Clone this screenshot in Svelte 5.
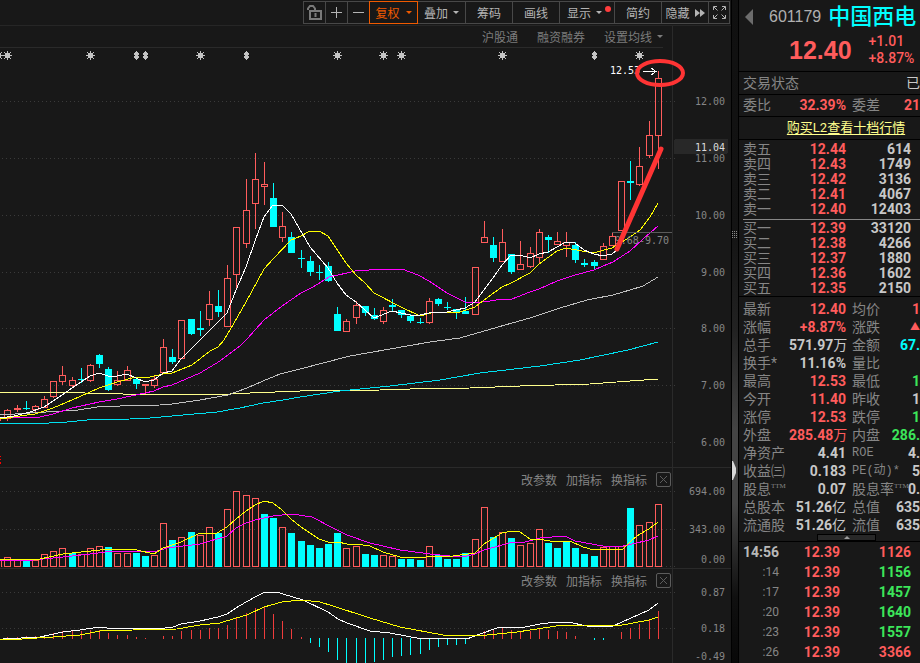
<script lang="ts">
  type Candle = [string, number, number, number, number];

  // colour, body top, body bottom, high, low
  const candles: Candle[] = [
    ['r', 410, 419, 409, 421], ['r', 408, 410, 405, 412], ['c', 408, 409, 401, 410], ['r', 406, 410, 405, 413],
    ['r', 399, 408, 396, 408], ['r', 381, 397, 381, 398], ['r', 375, 382, 366, 385], ['r', 380, 386, 377, 388],
    ['c', 379, 380, 368, 383], ['r', 365, 381, 364, 382], ['c', 355, 364, 354, 368], ['c', 369, 390, 367, 391],
    ['r', 380, 385, 371, 386], ['r', 370, 381, 366, 381], ['c', 379, 384, 377, 389], ['r', 384, 386, 384, 395],
    ['r', 379, 386, 375, 388], ['r', 347, 373, 339, 374], ['c', 357, 362, 349, 364], ['r', 320, 359, 320, 359],
    ['c', 319, 334, 319, 335], ['c', 328, 330, 311, 336], ['r', 304, 320, 291, 326], ['c', 306, 312, 290, 317],
    ['r', 278, 327, 265, 327], ['r', 227, 275, 227, 289], ['r', 210, 244, 179, 248], ['r', 179, 204, 153, 229],
    ['r', 184, 187, 162, 205], ['c', 198, 227, 183, 227], ['r', 226, 238, 212, 242], ['c', 237, 253, 232, 253],
    ['c', 258, 259, 250, 268], ['c', 261, 272, 256, 276], ['c', 272, 273, 265, 280], ['c', 266, 281, 262, 282],
    ['c', 314, 331, 307, 331], ['r', 321, 332, 319, 332], ['r', 305, 318, 301, 324], ['c', 306, 313, 306, 316],
    ['c', 315, 319, 308, 320], ['r', 310, 322, 307, 324], ['c', 305, 307, 299, 312], ['c', 310, 315, 310, 318],
    ['c', 316, 321, 314, 323], ['c', 322, 323, 318, 324], ['r', 301, 323, 298, 324], ['c', 299, 304, 298, 306],
    ['c', 307, 308, 302, 310], ['c', 309, 312, 309, 319], ['c', 311, 314, 297, 314], ['r', 267, 315, 267, 315],
    ['r', 237, 243, 221, 243], ['c', 245, 258, 237, 262], ['r', 242, 262, 229, 262], ['c', 254, 272, 254, 274],
    ['r', 264, 270, 241, 270], ['r', 253, 267, 247, 268], ['r', 232, 258, 229, 264], ['c', 237, 240, 235, 253],
    ['r', 241, 245, 232, 245], ['r', 242, 246, 232, 257], ['c', 245, 260, 242, 263], ['c', 263, 265, 259, 267],
    ['c', 262, 266, 260, 270], ['r', 246, 260, 243, 260], ['r', 236, 246, 233, 246], ['r', 181, 231, 181, 231],
    ['c', 181, 183, 161, 200], ['r', 166, 185, 147, 186], ['r', 135, 156, 121, 158], ['r', 78, 136, 71, 169]
  ];

  const volumes =
    'r557 r560 c561 r560 r554 r551 r548 c553 r554 r548 r546 c547 r553 r553 c553 c556 r555 r523 c540 r537 c532 r535 r527 c533 ' +
    'r509 r491 r495 r498 c514 c518 r527 c533 c541 c545 c548 c544 c533 r548 r546 c554 c555 r555 r556 c559 c559 c560 r546 c555 ' +
    'c559 c559 c553 r539 r507 c537 r532 c538 r545 r543 r529 c543 c548 c541 c548 c554 c556 r547 r546 r546 c508 r525 r522 r504';

  const volumeBars = volumes.split(' ').map((v, i) => ({ x: cx(i), kind: v[0], y: Number(v.slice(1)) }));

  // bar ends, 0 = no bar; values under the base line are negative momentum
  const macd = [
    637, 637, 636, 636, 635, 633, 631, 630, 631, 630, 630, 633, 635, 635, 637, 638, 0, 636, 636, 631, 630, 630, 628, 628,
    625, 618, 613, 608, 607, 614, 621, 629, 637, 643, 647, 652, 660, 663, 663, 663, 662, 660, 657, 656, 655, 654, 650, 647,
    645, 645, 644, 0, 631, 629, 627, 630, 631, 631, 628, 630, 631, 632, 636, 0, 640, 640, 0, 632, 628, 624, 619, 611
  ];

  const priceLines = [
    { cls: 'ma250', pts: '0,392 85,393 123,394 230,394 250,393 300,391 380,390 410,389 470,388 520,386 590,384 630,381 658,379' },
    { cls: 'ma120', pts: '0,423 49,423 67,422 87,420 130,419 150,418 183,415 217,412 240,408 263,403 283,400 300,397 340,391 390,386 440,380 480,373 540,366 580,360 628,350 658,342' },
    { cls: 'ma60', pts: '0,415 30,413 62,411 78,410 97,407 120,406 160,405 172,404 200,400 228,395 247,388 263,381 280,374 300,369 350,356 390,349 430,342 460,338 512,323 530,318 560,308 587,300 613,295 630,290 643,286 658,277' },
    { cls: 'ma20', pts: '0,417 40,417 53,414 72,408 99,402 117,399 145,393 154,391 163,387 172,385 200,373 220,361 240,346 247,339 264,320 282,306 301,293 313,287 329,277 347,273 355,271 383,269 402,269 418,275 429,281 447,293 465,302 475,303 490,301 502,299 512,299 530,292 539,289 557,281 575,275 594,270 603,266 613,262 630,251 643,239 658,226' },
    { cls: 'ma10', pts: '0,419 20,416 35,414 53,408 72,400 90,392 99,388 117,382 136,377 150,377 163,374 172,373 192,365 210,351 218,347 224,340 230,330 246,302 264,269 273,259 291,240 301,236 310,231 319,231 328,236 346,263 356,275 365,283 374,293 401,307 420,316 434,312 460,312 475,307 484,300 502,287 511,283 530,273 539,264 557,251 566,248 593,253 612,248 630,237 640,230 650,217 658,203' },
    { cls: 'ma5', pts: '0,418 14,416 30,412 44,407 62,395 72,388 81,382 90,376 99,373 108,376 117,376 127,374 136,378 145,382 154,380 163,373 172,371 181,359 200,340 227,313 236,290 246,267 255,241 264,217 273,205 282,205 291,214 310,247 328,268 337,283 346,295 356,302 374,318 392,311 410,315 420,315 429,313 447,312 465,308 475,302 493,278 502,265 511,255 520,255 530,258 539,254 548,252 566,242 575,243 584,250 594,254 603,256 612,254 618,249 639,201 650,177 658,152' }
  ];

  const volumeLines = [
    { cls: 'ma20', pts: '0,561 33,560 63,557 90,554 113,551 147,551 154,552 167,548 200,544 217,539 227,536 236,528 246,523 255,520 273,516 292,514 312,517 333,528 347,535 370,543 400,550 430,554 450,556 467,556 475,554 484,550 513,542 525,542 540,538 565,536 575,541 603,546 623,546 632,544 649,540 658,536' },
    { cls: 'ma10', pts: '0,559 40,559 63,554 100,550 127,549 137,550 154,554 163,548 181,542 200,533 217,533 227,527 236,519 246,511 255,505 264,501 273,503 282,510 291,519 301,527 310,533 319,539 328,542 338,542 347,544 356,544 370,546 383,552 400,557 410,557 422,558 430,556 453,556 475,553 484,544 502,533 512,531 520,532 530,539 537,539 557,542 570,541 583,547 594,550 603,549 622,550 632,540 640,534 649,529 658,522' }
  ];

  const macdLines = [
    { cls: 'ma5', pts: '3,639 40,637 63,632 80,630 99,627 107,628 140,628 158,629 173,627 181,624 200,621 218,617 227,614 236,608 246,602 257,596 265,592 277,592 283,594 303,600 328,612 338,619 347,623 370,631 390,633 422,639 437,638 467,639 480,634 500,627 525,627 540,624 557,622 568,622 587,626 600,627 613,626 622,622 640,614 649,610 658,603' },
    { cls: 'ma10', pts: '0,639 22,639 53,637 80,635 100,631 133,630 177,629 200,625 220,623 236,618 247,615 264,607 282,602 301,600 320,602 333,606 370,618 400,627 443,635 477,636 517,632 563,625 583,625 617,626 649,620 658,617' }
  ];

  const priceAxis = [
    [101, '12.00'], [158, '11.00'], [215, '10.00'], [272, '9.00'], [328, '8.00'], [385, '7.00'], [442, '6.00']
  ];
  const stars = [-2, 7, 90, 200, 337, 383, 401, 502, 639];
  const diamonds = [136, 145, 246, 594];

  const asks = [['卖五', '12.44', '614'], ['卖四', '12.43', '1749'], ['卖三', '12.42', '3136'], ['卖二', '12.41', '4067'], ['卖一', '12.40', '12403']];
  const bids = [['买一', '12.39', '33120'], ['买二', '12.38', '4266'], ['买三', '12.37', '1880'], ['买四', '12.36', '1602'], ['买五', '12.35', '2150']];

  const quotes = [
    { a: '最新', av: '12.40', ac: 'up', b: '均价', bv: '1', bc: 'up' },
    { a: '涨幅', av: '+8.87%', ac: 'up', b: '涨跌', bv: '▲', bc: 'up mark' },
    { a: '总手', av: '571.97', unit: '万', b: '金额', bv: '67.', bc: 'cyan' },
    { a: '换手*', av: '11.16%', b: '量比', bv: '' },
    { a: '最高', av: '12.53', ac: 'up', b: '最低', bv: '1', bc: 'down' },
    { a: '今开', av: '11.40', ac: 'up', b: '昨收', bv: '1' },
    { a: '涨停', av: '12.53', ac: 'up', b: '跌停', bv: '1', bc: 'down' },
    { a: '外盘', av: '285.48', unit: '万', ac: 'up', b: '内盘', bv: '286.', bc: 'down' },
    { a: '净资产', av: '4.41', b: 'ROE', latin: true, bv: '4.' },
    { a: '收益㈢', av: '0.183', b: 'PE(动)*', latin: true, bv: '5' },
    { a: '股息', as: 'TTM', av: '0.07', b: '股息率', bs: 'TTM', bv: '0.' },
    { a: '总股本', av: '51.26', unit: '亿', b: '总值', bv: '635' },
    { a: '流通股', av: '51.26', unit: '亿', b: '流值', bv: '635' }
  ];

  const ticks = [
    ['14:56', '12.39', '1126', 'up'], [':14', '12.39', '1156', 'down'], [':17', '12.39', '1457', 'down'],
    [':20', '12.39', '1640', 'down'], [':23', '12.39', '1557', 'down'], [':26', '12.39', '3366', 'up']
  ];

  function cx(i: number): number {
    return Math.ceil(6.97 + i * 9.159);
  }
</script>

{#snippet indicatorBar()}
  <div class="indicator-bar">
    <div class="indicator-actions">
      <button>改参数</button>
      <button>加指标</button>
      <button>换指标</button>
      <button class="close" aria-label="关闭">
        <svg width="15" height="15" viewBox="0 0 15 15"><rect x="0.5" y="0.5" width="14" height="14" rx="1.5" /><path d="M4 4l7 7M11 4l-7 7" /></svg>
      </button>
    </div>
    <div class="axis-gap"></div>
  </div>
{/snippet}

<main class="app">
  <section class="charts">
    <nav class="toolbar">
      <button class="tool icon" aria-label="锁定">
        <svg width="16" height="17" viewBox="0 0 16 17" class="lock"><path d="M3 7h11v8H3zM1 6V4.500L3 2h3l2 2.500V7M8.500 9v4" /></svg>
      </button>
      <button class="tool icon" aria-label="放大">
        <svg width="13" height="13" viewBox="0 0 13 13"><path d="M1 6.500h11M6.500 1v11" /></svg>
      </button>
      <button class="tool icon" aria-label="缩小">
        <svg width="13" height="13" viewBox="0 0 13 13"><path d="M1 6.500h11" /></svg>
      </button>
      <button class="tool active">复权<i class="caret"></i></button>
      <button class="tool">叠加<i class="caret"></i></button>
      <button class="tool">筹码</button>
      <button class="tool">画线</button>
      <button class="tool wide">显示<i class="caret"></i><i class="dot"></i></button>
      <button class="tool">简约</button>
      <button class="tool">隐藏<svg width="10" height="8" viewBox="0 0 10 8" class="solid"><path d="M0 0l5 4-5 4zM5 0l5 4-5 4z" /></svg></button>
      <button class="tool icon" aria-label="全屏">
        <svg width="15" height="15" viewBox="0 0 15 15"><path d="M1.500 5V1.500H5M10 1.500h3.500V5M13.500 10v3.500H10M5 13.500H1.500V10M2 2l3.500 3.500M13 2L9.500 5.500M13 13L9.500 9.500M2 13l3.500-3.500" /></svg>
      </button>
    </nav>

    <div class="subbar">
      <div class="subbar-links">
        <button>沪股通</button>
        <button>融资融券</button>
        <button>设置均线<i class="caret"></i></button>
      </div>
      <div class="axis-gap"></div>
    </div>

    <svg class="chart" viewBox="0 48 731 419">
      {#each priceAxis as [y, label]}
        <line class="grid" x1="2" x2="675" y1={Number(y) + 0.5} y2={Number(y) + 0.5} />
        <text class="axis" x="725" y={y}>{label}</text>
      {/each}
      <line class="divider" x1="672.5" x2="672.5" y1="48" y2="467" />

      {#each stars as x}
        <g class="marker" transform="translate({x} 55)">
          <rect x="-2" y="-2" width="5" height="5" />
          <path d="M0-4h1v9h-1zM-4 0h9v1h-9zM-3-3h1v1h-1zM3-3h1v1h-1zM-3 3h1v1h-1zM3 3h1v1h-1z" />
        </g>
      {/each}
      {#each diamonds as x}
        <path class="marker" transform="translate({x} 55)" d="M0-4h1v1h1v1h1v2h-1v1h1v2h-1v1h-1v1h-1v-1h-1v-1h-1v-2h1v-1h-1v-2h1v-1h1z" />
      {/each}

      <rect class="r fill" x="0" y="418" width="1" height="3" />
      {#each candles as [kind, top, bottom, high, low], i}
        <path class={kind} d="M{cx(i) + 0.5} {high}V{top}M{cx(i) + 0.5} {bottom}V{low}" />
        {#if kind === 'r' && bottom - top > 2}
          <rect class="r" x={cx(i) - 2.5} y={top + 0.5} width="6" height={bottom - top - 1} />
        {:else}
          <rect class="{kind} fill" x={cx(i) - 3} y={top} width="7" height={bottom - top} />
          <path class={kind} d="M{cx(i) + 0.5} {high}V{low}" />
        {/if}
      {/each}
      {#each priceLines as line}
        <polyline class={line.cls} points={line.pts} />
      {/each}

      <line class="cost" x1="612" x2="672" y1="232.5" y2="232.5" />
      <text class="axis" x="669" y="240">9.68-9.70</text>
      <rect class="tag" x="674" y="139" width="54" height="15" rx="2" />
      <text class="axis current" x="725" y="147">11.04</text>
      <text class="axis high" x="640" y="70">12.53</text>
      <path class="arrow" d="M643 71.500h14M651 68l5 3.500-5 3.500" />
      <path class="side-mark" d="M0 456h1v1h-1zM0 459h1v1h-1zM0 462h1v2h-1z" />
      <ellipse class="pen" cx="660" cy="73" rx="23" ry="12" />
      <line class="pen" x1="617" y1="249" x2="661" y2="149" />
    </svg>

    <div class="panel">
      {@render indicatorBar()}
      <svg class="chart" viewBox="0 490 731 78">
        {#each [[491, 491, '694.00'], [529, 529, '343.00'], [566, 559, '0.00']] as [y, ty, label]}
          <line class="grid" x1="2" x2="675" y1={Number(y) + 0.5} y2={Number(y) + 0.5} />
          <text class="axis" x="725" y={ty}>{label}</text>
        {/each}
        <line class="divider" x1="672.5" x2="672.5" y1="490" y2="568" />
        <path class="r" d="M0 560.500h1.500V567" />
        {#each volumeBars as bar}
          {#if bar.kind === 'r'}
            <rect class="r" x={bar.x - 2.5} y={bar.y + 0.5} width="6" height={566 - bar.y} />
          {:else}
            <rect class="c fill" x={bar.x - 3} y={bar.y} width="7" height={567 - bar.y} />
          {/if}
        {/each}
        {#each volumeLines as line}
          <polyline class={line.cls} points={line.pts} />
        {/each}
      </svg>
    </div>

    <div class="panel">
      {@render indicatorBar()}
      <svg class="chart" viewBox="0 591 731 72">
        {#each [[592, '0.87'], [628, '0.18']] as [y, label]}
          <line class="grid" x1="2" x2="675" y1={Number(y) + 0.5} y2={Number(y) + 0.5} />
          <text class="axis" x="725" y={y}>{label}</text>
        {/each}
        <text class="axis" x="725" y="656">-0.49</text>
        <line class="divider" x1="672.5" x2="672.5" y1="591" y2="663" />
        {#each macd as end, i}
          {#if end > 638}
            <rect class="c fill" x={cx(i)} y="638" width="1" height={end - 638} />
          {:else if end > 0}
            <rect class="momentum" x={cx(i)} y={end} width="1" height={639 - end} />
          {/if}
        {/each}
        {#each macdLines as line}
          <polyline class={line.cls} points={line.pts} />
        {/each}
      </svg>
    </div>
  </section>

  <div class="splitter">
    <svg class="grip" width="6" height="8" viewBox="0 0 6 8"><path d="M0 0h1v1h-1zM2 0h1v1h-1zM4 0h1v1h-1zM0 2h1v1h-1zM2 2h1v1h-1zM4 2h1v1h-1zM0 4h1v1h-1zM2 4h1v1h-1zM4 4h1v1h-1zM0 6h1v1h-1zM2 6h1v1h-1zM4 6h1v1h-1z" /></svg>
    <svg class="handle" width="4" height="19" viewBox="0 0 4 19"><path d="M0 0h1l3 7v5l-3 7h-1z" /></svg>
  </div>

  <aside class="quote">
    <header class="stock">
      <svg class="prev" width="8" height="16" viewBox="0 0 8 16"><path d="M8 0v16L0 8z" /></svg>
      <div class="stock-name"><span class="code">601179</span><h1>中国西电</h1></div>
      <div class="stock-price">
        <strong>12.40</strong>
        <div class="change"><span>+1.01</span><span>+8.87%</span></div>
      </div>
    </header>
    <div class="status"><span>交易状态</span><span>已</span></div>
    <div class="ratio">
      <span>委比</span><b class="up">32.39%</b><span>委差</span><b class="up">21</b>
    </div>
    <div class="promo"><a href="#l2">购买L2查看十档行情</a></div>

    <div class="book">
      {#each [asks, bids] as side}
        <table>
          <tbody>
            {#each side as [name, price, size]}
              <tr><th>{name}</th><td class="up">{price}</td><td>{size}</td></tr>
            {/each}
          </tbody>
        </table>
      {/each}
    </div>

    <table class="info">
      <colgroup><col class="name" /><col class="value" /><col class="name-2" /><col /></colgroup>
      <tbody>
        {#each quotes as q}
          <tr>
            <th>{q.a}{#if q.as}<sup>{q.as}</sup>{/if}</th>
            <td class={q.ac}>{q.av}{#if q.unit}<span class="unit">{q.unit}</span>{/if}</td>
            <th class:latin={q.latin}>{q.b}{#if q.bs}<sup>{q.bs}</sup>{/if}</th>
            <td class={q.bc}>{q.bv}</td>
          </tr>
        {/each}
      </tbody>
    </table>
    <div class="fold"><button aria-label="收起"><i></i></button></div>

    <table class="ticks">
      <tbody>
        {#each ticks as [time, price, size, dir], i}
          <tr><th class:full={i === 0}>{time}</th><td class="up">{price}</td><td class={dir}>{size}</td></tr>
        {/each}
      </tbody>
    </table>
  </aside>
</main>

<style>
  :global(body) {
    background: #181818;
    overflow-x: hidden;
  }

  .app {
    display: grid;
    grid-template-columns: minmax(0, 1fr) 8px 181px;
    background: #181818;
    color: #c8c8c8;
    font-family: Roboto, 'Noto Sans CJK SC', sans-serif;
    font-size: 14px;
  }

  button {
    background: none;
    border: 0;
    padding: 0;
    margin: 0;
    color: inherit;
    font: inherit;
    cursor: pointer;
  }

  /* toolbar */
  .toolbar {
    display: flex;
    justify-content: flex-end;
    height: 23px;
    padding: 1px 1px 1px 0;
    border-bottom: 1px solid #262626;
    font-size: 12px;
    color: #b4b4b4;
  }
  .tool {
    display: flex;
    align-items: center;
    justify-content: center;
    gap: 5px;
    box-sizing: border-box;
    width: 47px;
    border: 1px solid #484848;
    border-right: 0;
    white-space: nowrap;
  }
  .tool.icon { width: 22px; }
  .tool.wide {
    position: relative;
    justify-content: flex-start;
    width: 55px;
    padding-left: 7px;
  }
  .tool.active {
    width: 49px;
    border: 1px solid #f05a00;
    color: #f05a00;
    gap: 6px;
  }
  .tool.active + .tool { border-left: 0; }
  .tool:last-child { border-right: 1px solid #484848; }
  .tool svg { fill: none; stroke: #b4b4b4; flex-shrink: 0; }
  .tool svg.lock { stroke: #7a7a7a; stroke-width: 2; }
  .tool svg.solid { fill: #b4b4b4; stroke: none; }
  .caret {
    border: 3px solid transparent;
    border-top-color: currentColor;
    border-bottom: 0;
  }
  .dot {
    position: absolute;
    top: 4px;
    right: 3px;
    width: 6px;
    height: 6px;
    border-radius: 50%;
    background: #ff3c3c;
  }

  .subbar { display: flex; height: 22px; }
  .subbar-links {
    flex: 1;
    display: flex;
    justify-content: flex-end;
    gap: 19px;
    margin-right: 9px;
    border-bottom: 1px solid #2a2a2a;
    color: #7c7c7c;
    font-size: 12px;
  }
  .subbar-links button { display: flex; align-items: center; gap: 5px; }
  .axis-gap {
    box-sizing: border-box;
    width: 59px;
    border-left: 1px solid #2a2a2a;
  }

  /* charts */
  .chart {
    display: block;
    width: 100%;
    overflow: visible;
    fill: none;
    shape-rendering: crispEdges;
  }
  .panel { border-top: 1px solid #2a2a2a; }
  .indicator-bar { display: flex; height: 22px; }
  .indicator-actions {
    flex: 1;
    display: flex;
    align-items: center;
    justify-content: flex-end;
    gap: 9px;
    padding-right: 1px;
    color: #848484;
    font-size: 12px;
  }
  .close { display: flex; }
  .close svg { fill: none; stroke: #5c5c5c; }
  .grid { stroke: #3a3a3a; stroke-dasharray: 1 3; }
  .divider { stroke: #2a2a2a; }
  .axis {
    fill: #868686;
    font-family: 'DejaVu Sans Mono', monospace;
    font-size: 10px;
    text-anchor: end;
    dominant-baseline: central;
  }
  .axis.current { fill: #dcdcdc; }
  .axis.high { fill: #fff; }
  .marker { fill: #c4c4c4; }
  .r { stroke: #ff5c5c; }
  .r.fill { fill: #ff5c5c; stroke: none; }
  .c { stroke: #00ffff; }
  .c.fill { fill: #00ffff; stroke: none; }
  .momentum { fill: #f03c3c; }
  .ma5 { stroke: #fff; }
  .ma10 { stroke: #ffff00; }
  .ma20 { stroke: #ff00ff; }
  .ma60 { stroke: #c0c0c0; }
  .ma120 { stroke: #00e0f0; }
  .ma250 { stroke: #ffff8c; }
  .cost { stroke: #5a5a5a; }
  .tag { fill: #282828; }
  .arrow { stroke: #fff; }
  .side-mark { fill: #f00; }
  .pen { stroke: #ff3434; stroke-width: 4; stroke-linecap: round; shape-rendering: auto; }
  line.pen { stroke-width: 5; }

  .splitter {
    display: flex;
    flex-direction: column;
    align-items: flex-start;
    box-sizing: border-box;
    border: 1px solid #000;
    border-width: 0 1px;
    background: linear-gradient(#101010 0, #141414 35%, #222 50%, #444 65%, #444 76%, #101010 90%, #080808);
  }
  .grip { margin-top: 231px; fill: #8c8c8c; }
  .handle { margin-top: 222px; fill: #d8d8d8; }

  /* quote panel */
  .quote {
    overflow: hidden;
    color: #868686;
  }
  .up { color: #ff5c5c; }
  .down { color: #3ce65a; }
  .cyan { color: #00ffff; }

  .stock {
    position: relative;
    height: 71px;
    border-bottom: 1px solid #000;
    white-space: nowrap;
  }
  .prev { position: absolute; left: 6px; top: 9px; fill: #6c6c6c; }
  .stock-name {
    display: flex;
    align-items: center;
    gap: 7px;
    height: 33px;
    padding-left: 30px;
  }
  .code { color: #b0b0b0; font: 16px 'Liberation Sans', Arial, sans-serif; }
  h1 { margin: 0; color: #00ffff; font-size: 22px; font-weight: 500; line-height: 33px; }
  .stock-price {
    display: flex;
    align-items: center;
    gap: 17px;
    padding-left: 50px;
    color: #ff5c5c;
    font-weight: 500;
  }
  .stock-price strong { font: bold 25px/30px 'Liberation Sans', Arial, sans-serif; }
  .change { display: flex; flex-direction: column; line-height: 17px; }

  .status, .ratio, .promo { border-bottom: 1px solid #000; line-height: 22px; height: 22px; }
  .status { display: flex; justify-content: space-between; padding-left: 4px; }
  .status span + span { color: #c8c8c8; }
  .ratio {
    display: grid;
    grid-template-columns: 28px 75px 34px 1fr;
    height: 21px;
    padding-left: 4px;
    line-height: 21px;
  }
  .ratio b { text-align: right; }
  .ratio span + b + span { padding-left: 6px; }
  .promo { text-align: center; padding-left: 33px; font-size: 13px; white-space: nowrap; }
  .promo a { color: #ffff8c; text-underline-offset: 2px; }

  table { width: 100%; border-collapse: collapse; table-layout: fixed; }
  th { padding: 0; font-weight: 400; text-align: left; white-space: nowrap; }
  td { padding: 0; font-weight: 700; text-align: right; color: #c8c8c8; white-space: nowrap; }
  td.up { color: #ff5c5c; }
  td.down { color: #3ce65a; }
  td.cyan { color: #00ffff; }

  .book { padding-left: 4px; border-bottom: 1px solid #000; }
  .book table { border-collapse: separate; border-spacing: 0; }
  .book tr { height: 15px; line-height: 15px; }
  .book th { width: 28px; }
  .book td:nth-child(2) { width: 75px; }
  .book td:last-child { padding-right: 9px; }
  .book table:first-child { margin: 2px 0; }
  .book table + table { padding-top: 1px; border-top: 1px solid #868686; }

  .info { margin-top: 3px; }
  .info .name { width: 50px; }
  .info .value { width: 57px; }
  .info .name-2 { width: 42px; }
  .info tr { height: 18px; line-height: 18px; }
  .info th { padding-left: 4px; }
  .info th:nth-child(3) { padding-left: 6px; }
  .info th.latin { font-family: 'Liberation Mono', 'Noto Sans CJK SC', monospace; font-size: 12px; }
  .info td.mark { font-size: 10px; }
  .unit { font-weight: 400; }
  sup { font: 7px/1 'Liberation Serif', serif; line-height: 0; vertical-align: 6px; }

  .fold {
    display: flex;
    padding-left: 78px;
    height: 7px;
    border-bottom: 1px solid #000;
  }
  .fold button {
    display: flex;
    align-items: center;
    justify-content: center;
    box-sizing: border-box;
    width: 59px;
    border: 1px solid #000;
    background: #282828;
  }
  .fold i { border: 3px solid transparent; border-bottom-color: #9c9c9c; border-top: 0; }

  .ticks tr { height: 20px; line-height: 20px; }
  .ticks th { width: 40px; text-align: right; font-size: 12px; }
  .ticks th.full { font-size: 14px; font-weight: 700; color: #b8b8b8; }
  .ticks td:nth-child(2) { width: 61px; }
  .ticks td:last-child { padding-right: 9px; }
</style>
